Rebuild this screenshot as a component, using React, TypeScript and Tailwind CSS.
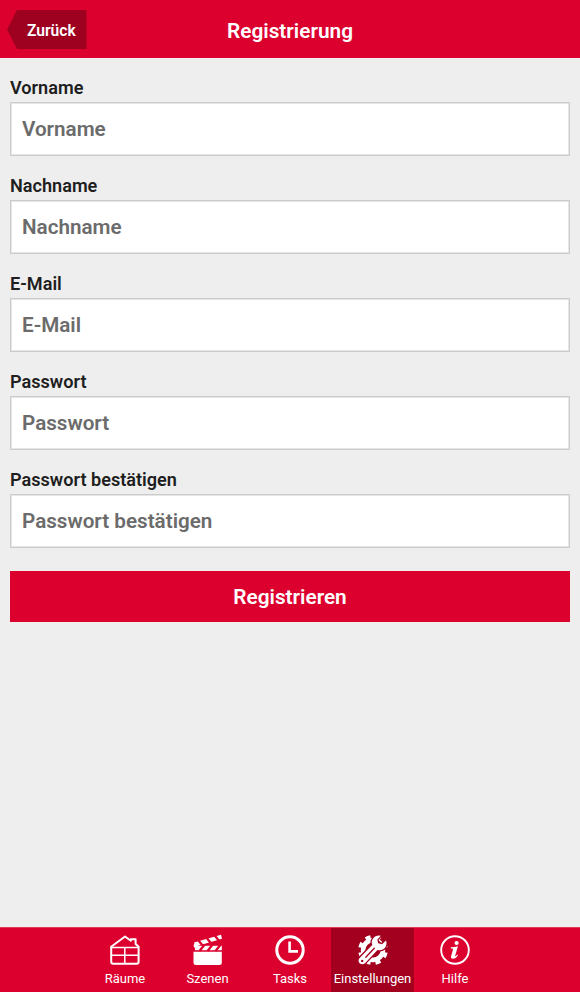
import React, { useState } from 'react';

const fields = [
  { id: 'firstName', label: 'Vorname', type: 'text' },
  { id: 'lastName', label: 'Nachname', type: 'text' },
  { id: 'email', label: 'E-Mail', type: 'email' },
  { id: 'password', label: 'Passwort', type: 'password' },
  { id: 'passwordConfirm', label: 'Passwort bestätigen', type: 'password' }
];

const RoomsIcon = () => (
  <svg className="w-[30px] h-[30px]" viewBox="0 0 30 30" fill="none" stroke="currentColor" strokeWidth="2" strokeLinejoin="round" strokeLinecap="round">
    <path d="M1.2 11.8V26.700Q1.2 28.700 3.200 28.700H26.600Q28.600 28.700 28.600 26.700V11.800L25.600 9V4.200H20.800V5.800L15 1.500L1.2 11.800Z" />
    <path strokeWidth="1.5" d="M1.2 12.4H28.6M1.2 20.2H28.6M14.8 12.4V28" />
  </svg>
);

const ScenesIcon = () => (
  <svg className="w-[30px] h-[31px]" viewBox="0 0 30 31" fill="currentColor">
    <path d="M.5 17.700H28.800V28.500Q28.800 31 26.300 31H3Q.5 31 .5 28.500Z" />
    {/* obere Klappe */}
    <path d="M1 8.600L28 .8L29 4.800L2.400 12.600Z" />
    <path stroke="#dc002e" strokeWidth="2.300" d="M5.500 6.500L10 12M13.700 4L18.200 9.500M21.700 1.500L26.200 7" />
    {/* untere Klappe */}
    <path d="M2 11.800H28.800V16.200H2Z" />
    <path stroke="#dc002e" strokeWidth="2.300" d="M11.300 11L6.500 17M19.300 11L14.500 17M27.300 11L22.500 17" />
    <circle cx="2.800" cy="11.700" r="2.200" />
  </svg>
);

const TasksIcon = () => (
  <svg className="w-[30px] h-[30px]" viewBox="0 0 30 30" fill="none" stroke="currentColor" strokeWidth="3">
    <circle cx="15" cy="15" r="13.200" />
    <path strokeWidth="2.600" d="M14.600 6.500V16.400H23" />
  </svg>
);

const SettingsIcon = () => (
  <svg className="w-[30px] h-[30px]" viewBox="0 0 30 30" fill="none">
    {/* Zahnrad */}
    <circle cx="15" cy="15" r="9.900" stroke="currentColor" strokeWidth="4.600" />
    <circle cx="15" cy="15" r="13.200" stroke="currentColor" strokeWidth="3.400" pathLength="80" strokeDasharray="5 5" strokeDashoffset="-2.500" />
    {/* Schraubenschlüssel */}
    <path stroke="#a30020" strokeWidth="9" strokeLinecap="round" d="M4 26L19 10" />
    <path
      fill="#a30020"
      stroke="#a30020"
      strokeWidth="2.600"
      strokeLinejoin="round"
      d="M22.700 .7Q17.500 -.1 14.700 4Q13 7.300 14.300 10L1.600 23Q-.5 25.700 1.600 28.200Q4.200 30.500 7 28.200L19.500 14.900Q23.500 16 26.600 13.200Q29.600 9.700 28 5.500L24 9.200L20.200 8.300L19.300 4.700Z"
    />
    <path
      fill="currentColor"
      d="M22.700 .7Q17.500 -.1 14.700 4Q13 7.300 14.300 10L1.600 23Q-.5 25.700 1.600 28.200Q4.200 30.500 7 28.200L19.500 14.900Q23.500 16 26.600 13.200Q29.600 9.700 28 5.500L24 9.200L20.200 8.300L19.300 4.700Z"
    />
    <path stroke="#a30020" strokeWidth="1.300" strokeLinecap="round" d="M7.800 22.300L16.300 13.200" />
    <circle cx="4.200" cy="25.900" r="1.200" fill="#a30020" />
  </svg>
);

const HelpIcon = () => (
  <svg className="w-[30px] h-[30px]" viewBox="0 0 30 30" fill="currentColor">
    <circle cx="15" cy="15" r="13.800" fill="none" stroke="currentColor" strokeWidth="1.900" />
    <circle cx="16.600" cy="8" r="2.100" />
    <path d="M10.800 12.300Q14.400 12.100 17.900 11.200L15.300 20.200Q14.900 21.500 15.500 21.300Q16.200 21 17.100 19.600L18 20.200Q15.700 23.800 13 23.800Q10.300 23.700 11.200 20.700L12.900 14.900Q13.200 13.500 12.400 13.500L10.700 13.400Z" />
  </svg>
);

const tabs = [
  { id: 'rooms', label: 'Räume', Icon: RoomsIcon },
  { id: 'scenes', label: 'Szenen', Icon: ScenesIcon },
  { id: 'tasks', label: 'Tasks', Icon: TasksIcon },
  { id: 'settings', label: 'Einstellungen', Icon: SettingsIcon },
  { id: 'help', label: 'Hilfe', Icon: HelpIcon }
];

const App: React.FC = () => {
  const [activeTab, setActiveTab] = useState('settings');
  const [values, setValues] = useState<Record<string, string>>({});

  return (
    <div className="flex flex-col h-screen bg-[#eeeeee] font-['Roboto',sans-serif] text-[#1e1e1e]">
      {/* Kopfzeile */}
      <header className="grid grid-cols-[1fr_auto_1fr] items-center h-[58px] shrink-0 bg-[#dc002e] text-white pt-px">
        <button className="flex items-center ml-[7px] h-[39px] w-[79.5px] pl-5 pt-1 bg-[#9e001f] text-[15.6px] font-semibold [clip-path:polygon(0_50%,10px_0,100%_0,100%_100%,10px_100%)]">
          Zurück
        </button>
        <h1 className="text-[20.8px] font-semibold pt-[5px]">Registrierung</h1>
      </header>

      {/* Formular */}
      <form className="flex-1 px-2.5 pt-[18px]" onSubmit={(e) => e.preventDefault()}>
        {fields.map((field) => (
          <div key={field.id} className="mb-[18px]">
            <label htmlFor={field.id} className="block h-[26px] text-[18.1px] leading-6 font-semibold">
              {field.label}
            </label>
            <input
              id={field.id}
              type={field.type}
              placeholder={field.label}
              value={values[field.id] || ''}
              onChange={(e) => setValues({ ...values, [field.id]: e.target.value })}
              className="block w-full h-[54px] px-[11px] bg-white border border-[#cbcbcb] shadow-[inset_0_0_0_1px_#e6e6e6] text-[20.65px] font-semibold placeholder:text-[#6b6b6b] outline-none"
            />
          </div>
        ))}
        <button type="submit" className="mt-[23px] block w-full h-[51px] pt-0.5 bg-[#dc002e] text-[20.8px] font-semibold text-white">
          Registrieren
        </button>
      </form>

      {/* Tab-Leiste */}
      <nav className="flex justify-center h-[65px] shrink-0 border-t border-[#e03a58] bg-[#dc002e] text-white">
        {tabs.map(({ id, label, Icon }) => (
          <button
            key={id}
            onClick={() => setActiveTab(id)}
            className={`flex flex-col items-center w-[82.5px] pt-1.5 text-[13px] ${activeTab === id ? 'bg-[#a30020]' : ''}`}
          >
            <span className="flex items-end h-[31px]">
              <Icon />
            </span>
            <span className="mt-1">{label}</span>
          </button>
        ))}
      </nav>
    </div>
  );
};

export default App;
